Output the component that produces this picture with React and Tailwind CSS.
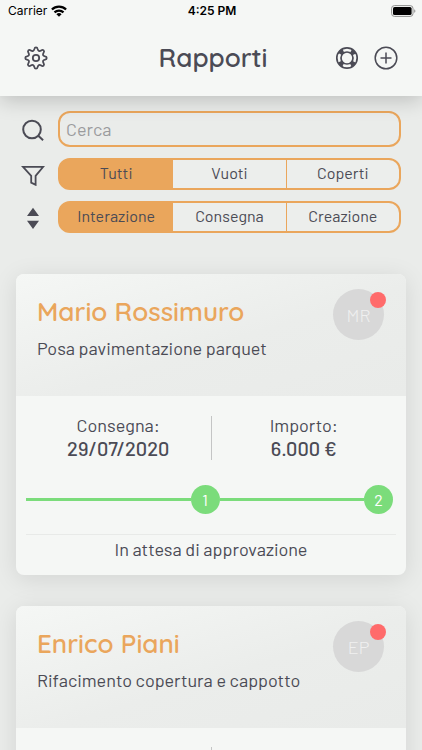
import { useState } from "react";

const jobs = [
  {
    id: 1,
    name: "Mario Rossimuro",
    initials: "MR",
    description: "Posa pavimentazione parquet",
    delivery: "29/07/2020",
    amount: "6.000 €",
    status: "In attesa di approvazione",
    steps: [1, 2],
  },
  {
    id: 2,
    name: "Enrico Piani",
    initials: "EP",
    description: "Rifacimento copertura e cappotto",
    steps: [],
  },
];

const WifiIcon = () => (
  <svg viewBox="0 0 16 12" className="w-4 h-3" aria-hidden="true">
    <g fill="none" stroke="#000" strokeWidth="2.2">
      <path d="M.9 4.6a10 10 0 0 1 14.2 0" />
      <path d="M3.5 7.4a6.4 6.4 0 0 1 9 0" />
    </g>
    <path d="M8 11.8 5.4 9.3a3.7 3.7 0 0 1 5.2 0z" />
  </svg>
);

const BatteryIcon = () => (
  <svg viewBox="0 0 25 12" className="w-[25px] h-3" aria-hidden="true">
    <rect x="0.6" y="0.6" width="21.4" height="10.8" rx="2.8" fill="none" stroke="#8f908f" />
    <rect x="2" y="2" width="18.6" height="8" rx="1.6" />
    <path d="M23.4 4.2c1.2.4 1.2 3.2 0 3.6z" fill="#777" />
  </svg>
);

const GearIcon = () => (
  <svg
    viewBox="0 0 24 24"
    className="size-6"
    fill="none"
    stroke="currentColor"
    strokeWidth="1.8"
    strokeLinejoin="round"
    aria-hidden="true"
  >
    <circle cx="12" cy="12" r="3.2" />
    <path d="M10.4 2.9Q10.7 1.3 12 1.3T13.6 2.9Q14.4 6.2 17.2 4.4Q18.6 3.5 19.6 4.4T19.6 6.8Q17.8 9.6 21.1 10.4Q22.7 10.7 22.7 12T21.1 13.6Q17.8 14.4 19.6 17.2Q20.5 18.6 19.6 19.6T17.2 19.6Q14.4 17.8 13.6 21.1Q13.3 22.7 12 22.7T10.4 21.1Q9.6 17.8 6.8 19.6Q5.4 20.5 4.4 19.6T4.4 17.2Q6.2 14.4 2.9 13.6Q1.3 13.3 1.3 12T2.9 10.4Q6.2 9.6 4.4 6.8Q3.5 5.4 4.4 4.4T6.8 4.4Q9.6 6.2 10.4 2.9Z" />
  </svg>
);

const HelpIcon = () => (
  <svg viewBox="0 0 24 24" className="size-6" fill="none" stroke="currentColor" aria-hidden="true">
    <circle cx="12" cy="12" r="10.2" strokeWidth="1.7" />
    <circle cx="12" cy="12" r="6" strokeWidth="1.7" />
    <circle
      cx="12"
      cy="12"
      r="8"
      strokeWidth="4"
      strokeDasharray="4.6 7.966"
      strokeDashoffset="-3.983"
    />
  </svg>
);

const PlusIcon = () => (
  <svg viewBox="0 0 24 24" className="size-6" fill="none" stroke="currentColor" strokeWidth="1.5" aria-hidden="true">
    <circle cx="12" cy="12" r="10.8" />
    <path d="M12 6.5v11M6.5 12h11" />
  </svg>
);

const SearchIcon = () => (
  <svg viewBox="0 0 24 24" className="size-6" fill="none" stroke="currentColor" strokeWidth="2" aria-hidden="true">
    <circle cx="11" cy="12.5" r="8.8" />
    <path d="m17.3 18.8 4.8 4.4" />
  </svg>
);

const FilterIcon = () => (
  <svg viewBox="0 0 24 24" className="size-6" fill="none" stroke="currentColor" strokeWidth="1.8" aria-hidden="true">
    <path d="M2 4.8h20.2l-7.6 9v9l-4.4-2.2v-6.8z" />
  </svg>
);

const SortIcon = () => (
  <svg viewBox="0 0 24 24" className="size-6" fill="currentColor" aria-hidden="true">
    <path d="M12 2.8 18 11H6zM12 24 6 15.8h12z" />
  </svg>
);

const Segment = ({ label, options, value, onChange }) => (
  <div
    role="group"
    aria-label={label}
    className="grid h-8 flex-1 grid-cols-3 gap-px overflow-hidden rounded-xl border-2 border-[#eaa65c] bg-[#eaa65c]"
  >
    {options.map((option) => (
      <button
        key={option}
        type="button"
        aria-pressed={option === value}
        onClick={() => onChange(option)}
        className={option === value ? "bg-[#eaa65c] pb-[2px]" : "bg-[#eceeec] pb-[2px]"}
      >
        {option}
      </button>
    ))}
  </div>
);

const Step = ({ number, first }) => (
  <>
    <span className={`h-[3px] grow bg-[#7bdc7b] ${first ? "basis-5" : "basis-0"}`} />
    <span className="flex size-[29px] items-center justify-center rounded-full bg-[#7bdc7b] text-base text-white">
      {number}
    </span>
  </>
);

const JobCard = ({ job }) => (
  <article className="overflow-hidden rounded-lg bg-[#f5f7f5] shadow-[0_4px_24px_rgba(0,0,0,0.1)]">
    <div className="flex h-[122px] items-start justify-between bg-linear-to-br from-[#f5f7f5] via-[#ebedeb] via-55% to-[#e9ebe9] pt-[15px] pr-[22px] pl-[21px]">
      <div className="pt-[3px]">
        <h2 className="font-['Quicksand','Lato',sans-serif] text-[26px] leading-10 font-semibold text-[#eaa65c]">
          {job.name}
        </h2>
        <p className="leading-8">{job.description}</p>
      </div>
      <div className="relative flex size-[51px] items-center justify-center rounded-full bg-[#d8d8d8] font-light text-[#f0f0f0]">
        {job.initials}
        <span className="absolute top-[3px] -right-[2px] size-4 rounded-full bg-[#ff6b6b]" />
      </div>
    </div>
    <div className="px-[10px] pb-3">
      <div className="flex items-center pt-[19px] text-center">
        <div className="flex-1">
          {job.delivery && (
            <>
              <p className="leading-5">Consegna:</p>
              <p className="text-xl leading-[26px] font-medium">{job.delivery}</p>
            </>
          )}
        </div>
        <div className="h-11 w-px bg-[#c4c5c5]" />
        <div className="flex-1">
          {job.amount && (
            <>
              <p className="leading-5">Importo:</p>
              <p className="text-xl leading-[26px] font-medium">{job.amount}</p>
            </>
          )}
        </div>
      </div>
      <div className="mt-6 flex items-center pr-[3px]">
        {job.steps.map((step, i) => (
          <Step key={step} number={step} first={i === 0} />
        ))}
      </div>
      {job.status && (
        <p className="mt-5 border-t border-[#e8eae8] text-center leading-7">{job.status}</p>
      )}
    </div>
  </article>
);

const App = () => {
  const [search, setSearch] = useState("");
  const [filter, setFilter] = useState("Tutti");
  const [sort, setSort] = useState("Interazione");

  return (
    <div className="flex h-screen flex-col overflow-hidden bg-[#eaecea] font-['Barlow','Roboto',sans-serif] text-lg text-[#4b4b55]">
      <header className="z-10 bg-[#f5f7f5] pb-[10px] shadow-[0_4px_20px_rgba(0,0,0,0.2)]">
        <div className="grid h-[22px] grid-cols-3 items-center pr-[6px] pl-2 font-[Inter,sans-serif] text-xs text-black">
          <span className="flex items-center gap-1">
            Carrier <WifiIcon />
          </span>
          <span className="text-center font-semibold">4:25 PM</span>
          <span className="flex justify-end">
            <BatteryIcon />
          </span>
        </div>
        <div className="grid h-16 grid-cols-[1fr_auto_1fr] items-end px-6 pb-1">
          <button type="button" aria-label="Impostazioni" className="mb-3 justify-self-start">
            <GearIcon />
          </button>
          <h1 className="pb-1 pl-1 font-['Quicksand','Lato',sans-serif] text-[26px] leading-10 font-semibold">
            Rapporti
          </h1>
          <div className="mb-3 flex gap-[15px] justify-self-end">
            <button type="button" aria-label="Aiuto">
              <HelpIcon />
            </button>
            <button type="button" aria-label="Nuovo rapporto">
              <PlusIcon />
            </button>
          </div>
        </div>
      </header>
      <main className="flex-1 overflow-y-auto [scrollbar-width:none]">
        <section className="flex flex-col gap-[11px] px-[21px] pt-[15px] text-base">
          <label className="flex items-center gap-[13px]">
            <SearchIcon />
            <input
              type="search"
              aria-label="Cerca"
              placeholder="Cerca"
              value={search}
              onChange={(e) => setSearch(e.target.value)}
              className="h-9 min-w-0 flex-1 rounded-xl border-2 border-[#eaa65c] px-[6px] text-lg placeholder:text-[#9a9b9d]"
            />
          </label>
          <div className="flex items-center gap-[13px]">
            <FilterIcon />
            <Segment
              label="Filtro"
              options={["Tutti", "Vuoti", "Coperti"]}
              value={filter}
              onChange={setFilter}
            />
          </div>
          <div className="flex items-center gap-[13px]">
            <SortIcon />
            <Segment
              label="Ordinamento"
              options={["Interazione", "Consegna", "Creazione"]}
              value={sort}
              onChange={setSort}
            />
          </div>
        </section>
        <section className="flex flex-col gap-[31px] px-4 pt-[41px] pb-8">
          {jobs.map((job) => (
            <JobCard key={job.id} job={job} />
          ))}
        </section>
      </main>
    </div>
  );
};

export default App;
